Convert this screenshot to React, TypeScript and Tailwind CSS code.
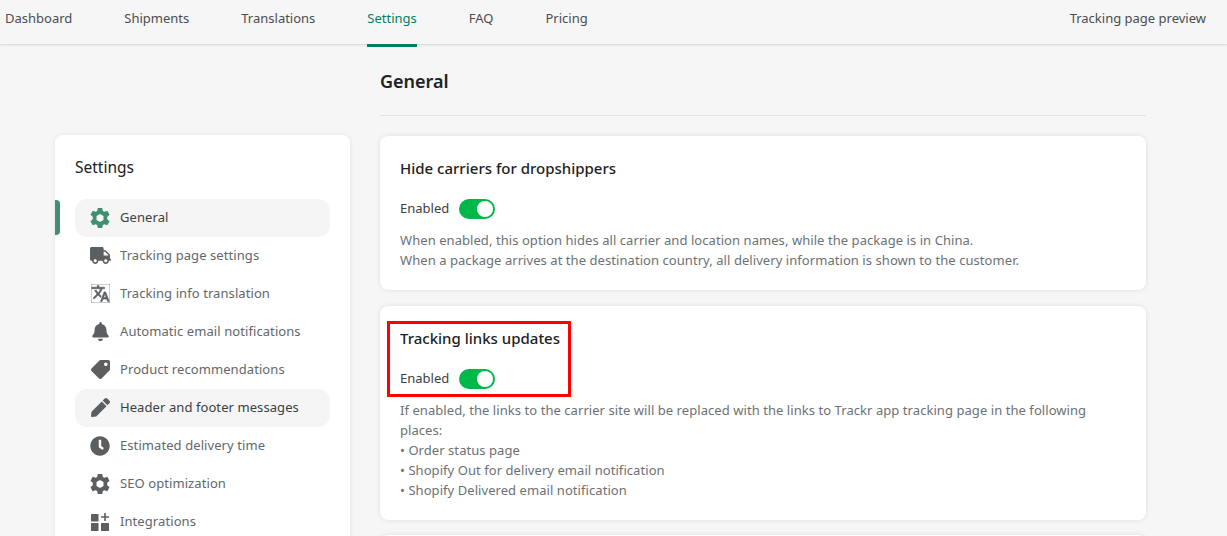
import { JSX } from "react"
import { FaBell, FaClock, FaPen, FaTag, FaTruck } from "react-icons/fa"
import { MdTranslate } from "react-icons/md"

const tabs = [
  { label: "Dashboard", className: "ml-[5px]" },
  { label: "Shipments", className: "ml-[52px]" },
  { label: "Translations", className: "ml-[52px]" },
  { label: "Settings", className: "ml-[52px]", active: true },
  { label: "FAQ", className: "ml-[52px]" },
  { label: "Pricing", className: "ml-[52px]" },
]

function Gear({ className }: { className?: string }) {
  return (
    <svg viewBox="0 0 24 24" width="22" height="22" className={className} fill="currentColor" fillRule="evenodd">
      <path d="M9.6 1h4.8l.7 3.3 1.7 1 3.2-1.1 2.4 4.2-2.5 2.2v2.8l2.5 2.2-2.4 4.2-3.2-1.1-1.7 1-.7 3.3H9.6l-.7-3.3-1.7-1-3.2 1.1-2.4-4.2 2.5-2.2v-2.8L1.600 8.400l2.400-4.200 3.200 1.100 1.700-1zM12 7.600l-3.800 2.200v4.400l3.800 2.200 3.800-2.200V9.800z" />
    </svg>
  )
}

function Blocks() {
  return (
    <svg viewBox="0 0 18 18" width="18" height="18" fill="currentColor">
      <rect x="0" y="1" width="7.500" height="7.500" rx="0.500" />
      <rect x="0" y="10" width="7.500" height="8" rx="0.500" />
      <rect x="10" y="10" width="8" height="8" rx="0.500" />
      <path d="M13.200 0h1.600v3.200H18v1.600h-3.200V8h-1.600V4.800H10V3.200h3.200z" />
    </svg>
  )
}

const menu: { label: string; icon: JSX.Element; active?: boolean; hover?: boolean }[] = [
  { label: "General", icon: <Gear className="text-[#3f8f70]" />, active: true },
  { label: "Tracking page settings", icon: <FaTruck size={21} /> },
  { label: "Tracking info translation", icon: <MdTranslate size={19} className="stroke-current stroke-[0.8]" /> },
  { label: "Automatic email notifications", icon: <FaBell size={19} /> },
  { label: "Product recommendations", icon: <FaTag size={19} className="rotate-90" /> },
  { label: "Header and footer messages", icon: <FaPen size={19} />, hover: true },
  { label: "Estimated delivery time", icon: <FaClock size={20} /> },
  { label: "SEO optimization", icon: <Gear /> },
  { label: "Integrations", icon: <Blocks /> },
]

function Toggle() {
  return (
    <span className="flex h-5 w-9 items-center justify-end rounded-full bg-[#00b84a] pr-[2px]">
      <span className="h-4 w-4 rounded-full bg-white" />
    </span>
  )
}

function Enabled() {
  return (
    <div className="flex h-5 items-center gap-[10px] text-[13px] text-[#3c4043]">
      <span>Enabled</span>
      <Toggle />
    </div>
  )
}

export default function App() {
  return (
    <div className="h-[536px] w-[1227px] overflow-hidden bg-[#f6f6f7] font-['Noto_Sans',sans-serif]">
      <header className="flex h-[45px] items-start border-b border-[#dcdddd] shadow-[0_1px_2px_rgba(0,0,0,0.06)]">
        {tabs.map((t) => (
          <div
            key={t.label}
            className={`${t.className} flex h-[47px] items-start border-b-[3px] pt-[9px] text-[13px] leading-[19px] ${
              t.active ? "border-[#008060] text-[#008060]" : "border-transparent text-[#4a4d50]"
            }`}
          >
            {t.label}
          </div>
        ))}
        <div className="ml-auto mr-[21px] pt-[9px] text-[13px] leading-[19px] text-[#4a4d50]">Tracking page preview</div>
      </header>

      <div className="flex">
        <aside className="ml-[55px] mt-[90px] w-[295px] shrink-0">
          <div className="relative h-[420px] rounded-t-[8px] bg-white px-5 pt-[21px] shadow-[0_0_5px_rgba(23,24,24,0.08)]">
            <h2 className="text-[15.5px] leading-[22px] text-[#202223]">Settings</h2>
            <span className="absolute left-0 top-[65px] h-[35px] w-[5px] rounded-r-[4px] bg-[#3f8f70]" />
            <ul className="mt-[21px]">
              {menu.map((m) => (
                <li
                  key={m.label}
                  className={`flex h-[38px] items-center rounded-[12px] pb-[1px] pl-[14px] text-[13px] tracking-[0.08px] ${
                    m.active || m.hover ? "bg-[#f5f5f6]" : ""
                  } ${m.active || m.hover ? "text-[#3c4043]" : "text-[#63676b]"}`}
                >
                  <span className="flex w-[22px] justify-center text-[#5c5f62]">{m.icon}</span>
                  <span className="ml-[9px]">{m.label}</span>
                </li>
              ))}
            </ul>
          </div>
        </aside>

        <main className="ml-[30px] w-[766px] shrink-0">
          <h1 className="mt-[21px] text-[18px] font-semibold leading-[30px] text-[#202223]">General</h1>
          <div className="mt-[19px] border-t border-[#e1e3e5]" />

          <section className="mt-5 h-[154px] rounded-[8px] bg-white px-5 pt-[21px] shadow-[0_0_5px_rgba(23,24,24,0.1)]">
            <h3 className="text-[15px] font-medium leading-[22px] text-[#202223]">Hide carriers for dropshippers</h3>
            <div className="mt-[20px]">
              <Enabled />
            </div>
            <p className="mt-[11px] text-[13px] leading-5 tracking-[0.06px] text-[#6d7175]">
              When enabled, this option hides all carrier and location names, while the package is in China.
              <br />
              When a package arrives at the destination country, all delivery information is shown to the customer.
            </p>
          </section>

          <section className="relative mt-4 h-[214px] rounded-[8px] bg-white px-5 pt-[21px] shadow-[0_0_5px_rgba(23,24,24,0.1)]">
            <h3 className="text-[15px] font-medium leading-[22px] text-[#202223]">Tracking links updates</h3>
            <div className="mt-[20px]">
              <Enabled />
            </div>
            <p className="mt-[11px] text-[13px] leading-5 tracking-[0.06px] text-[#6d7175]">
              If enabled, the links to the carrier site will be replaced with the links to Trackr app tracking page in the following
              <br />
              places:
              <br />• Order status page
              <br />• Shopify Out for delivery email notification
              <br />• Shopify Delivered email notification
            </p>
            <div className="absolute left-[7px] top-[15px] h-[76px] w-[184px] border-[3px] border-[#ff0000]" />
          </section>

          <section className="mt-[15px] h-10 rounded-[8px] bg-white shadow-[0_0_5px_rgba(23,24,24,0.1)]" />
        </main>
      </div>
    </div>
  )
}
